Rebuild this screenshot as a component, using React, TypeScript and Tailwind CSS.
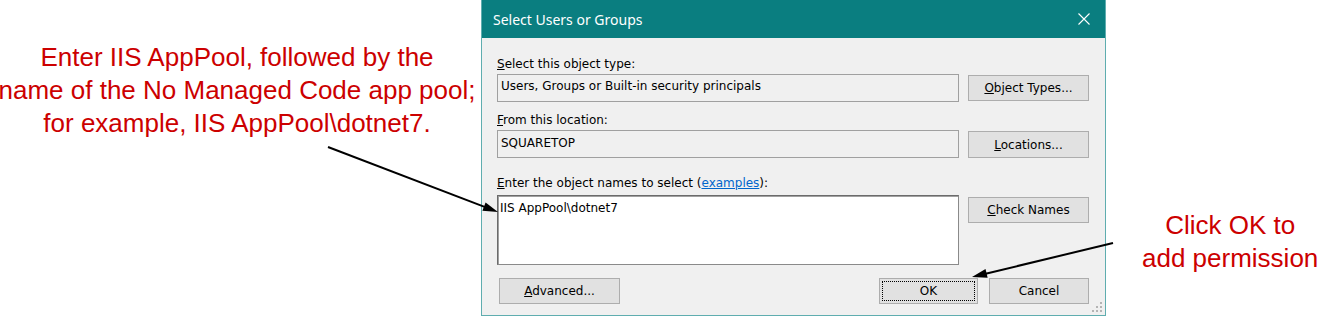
const sans = "font-['Liberation_Sans',Arial,sans-serif]";
const ui = "font-['DejaVu_Sans',Verdana,sans-serif]";

function Arrow({ x1, y1, x2, y2 }: { x1: number; y1: number; x2: number; y2: number }) {
  const dx = x2 - x1;
  const dy = y2 - y1;
  const len = Math.hypot(dx, dy);
  const ux = dx / len;
  const uy = dy / len;
  const bx = x2 - ux * 15;
  const by = y2 - uy * 15;
  const px = -uy * 4.5;
  const py = ux * 4.5;
  return (
    <g>
      <line x1={x1} y1={y1} x2={bx + ux * 2} y2={by + uy * 2} stroke="#000" strokeWidth={2} />
      <polygon points={`${x2},${y2} ${bx + px},${by + py} ${bx - px},${by - py}`} fill="#000" />
    </g>
  );
}

function Btn({ children, className = "" }: { children: React.ReactNode; className?: string }) {
  return (
    <div
      className={`flex items-center justify-center bg-[#e1e1e1] border border-[#adadad] text-[12px] leading-[14px] text-black ${className}`}
    >
      {children}
    </div>
  );
}

function Dialog() {
  return (
    <div className="relative w-[625px] h-[316px] shrink-0 flex flex-col border-x border-b border-[#5fadaf] bg-[#f0f0f0]">
      <div className="h-[38px] shrink-0 flex items-center justify-between bg-[#0a7e80] pl-[11px] pr-[15px]">
        <span className="font-['Noto_Sans',sans-serif] text-[14px] text-white">Select Users or Groups</span>
        <svg width="12" height="12" viewBox="0 0 12 12">
          <path d="M0.5 0.5 L11.5 11.5 M11.5 0.5 L0.5 11.5" stroke="#fff" strokeWidth={1.1} />
        </svg>
      </div>

      <div className={`flex flex-col pl-[15px] pr-[16px] pt-[19px] ${ui} text-[12px] leading-[14px] text-black`}>
        <div>
          <u>S</u>elect this object type:
        </div>
        <div className="mt-[3px] flex">
          <div className="w-[462px] h-[28px] border border-[#a0a0a0] bg-[#f0f0f0] pl-[3px] pt-[4px]">
            Users, Groups or Built-in security principals
          </div>
          <Btn className="ml-[9px] mt-[1px] w-[121px] h-[26px]">
            <span>
              <u>O</u>bject Types...
            </span>
          </Btn>
        </div>

        <div className="mt-[11px]">
          <u>F</u>rom this location:
        </div>
        <div className="mt-[3px] flex">
          <div className="w-[462px] h-[28px] border border-[#a0a0a0] bg-[#f0f0f0] pl-[3px] pt-[5px]">SQUARETOP</div>
          <Btn className="ml-[9px] mt-[1px] w-[121px] h-[27px]">
            <span>
              <u>L</u>ocations...
            </span>
          </Btn>
        </div>

        <div className="mt-[18px]">
          <u>E</u>nter the object names to select (<span className="text-[#0066cc] underline">examples</span>):
        </div>
        <div className="mt-[5px] flex">
          <div className="w-[462px] h-[70px] border border-[#8a8a8a] border-l-[#6b6b6b] border-t-[#6b6b6b] bg-white pl-[2px] pt-[5px] shadow-[inset_1px_1px_0_#a0a0a0]">
            IIS AppPool\dotnet7
          </div>
          <Btn className="ml-[9px] mt-[2px] w-[121px] h-[26px]">
            <span>
              <u>C</u>heck Names
            </span>
          </Btn>
        </div>

        <div className="mt-[13px] flex">
          <Btn className="ml-[2px] w-[121px] h-[26px]">
            <span>
              <u>A</u>dvanced...
            </span>
          </Btn>
          <Btn className="relative ml-auto w-[99px] h-[26px] border-[#0078d7]">
            <span className="absolute inset-[2px] border border-dotted border-black" />
            <span>OK</span>
          </Btn>
          <Btn className="ml-[11px] w-[100px] h-[26px]">Cancel</Btn>
        </div>
      </div>

      <svg className="absolute right-[2px] bottom-[2px]" width="12" height="12" viewBox="0 0 12 12">
        <rect x="9" y="1" width="2" height="2" fill="#b4b4b4" />
        <rect x="5" y="5" width="2" height="2" fill="#b4b4b4" />
        <rect x="9" y="5" width="2" height="2" fill="#b4b4b4" />
        <rect x="1" y="9" width="2" height="2" fill="#b4b4b4" />
        <rect x="5" y="9" width="2" height="2" fill="#b4b4b4" />
        <rect x="9" y="9" width="2" height="2" fill="#b4b4b4" />
      </svg>
    </div>
  );
}

export default function App() {
  return (
    <div className={`relative w-[1318px] h-[317px] bg-white flex overflow-hidden ${sans}`}>
      <div className="w-[481px] shrink-0 pr-[7px] pt-[41px] flex flex-col items-center text-[26px] leading-[33px] text-[#cc0000] whitespace-nowrap">
        <p>Enter IIS AppPool, followed by the</p>
        <p>name of the No Managed Code app pool;</p>
        <p>for example, IIS AppPool\dotnet7.</p>
      </div>

      <Dialog />

      <div className="flex-1 pl-[36px] pt-[209px] flex flex-col items-center text-[26px] leading-[33px] text-[#cc0000] whitespace-nowrap">
        <p>Click OK to</p>
        <p>add permission</p>
      </div>

      <svg className="absolute inset-0 pointer-events-none" width="1318" height="317">
        <Arrow x1={328} y1={147} x2={498} y2={212} />
        <Arrow x1={1113} y1={243} x2={972} y2={277} />
      </svg>
    </div>
  );
}
